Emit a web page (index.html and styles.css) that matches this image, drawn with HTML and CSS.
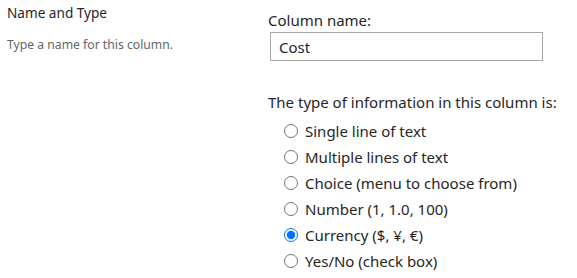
FILE: index.html
```html
<!DOCTYPE html>
<html>
<head>
<meta charset="utf-8">
<link rel="stylesheet" href="styles.css">
</head>
<body>
<div class="section">
  <div class="desc">
    <div class="title">Name and Type</div>
    <div class="hint">Type a name for this column.</div>
  </div>
  <div class="fields">
    <label class="label" for="colname">Column name:</label>
    <input class="textbox" id="colname" type="text" value="Cost">
    <div class="label type-label">The type of information in this column is:</div>
    <div class="options">
      <label class="option"><input type="radio" name="t"> Single line of text</label>
      <label class="option"><input type="radio" name="t"> Multiple lines of text</label>
      <label class="option"><input type="radio" name="t"> Choice (menu to choose from)</label>
      <label class="option"><input type="radio" name="t"> Number (1, 1.0, 100)</label>
      <label class="option"><input type="radio" name="t" checked> Currency ($, ¥, €)</label>
      <label class="option"><input type="radio" name="t"> Yes/No (check box)</label>
    </div>
  </div>
</div>
</body>
</html>
```

FILE: styles.css
```css
html, body {
  margin: 0;
  padding: 0;
  background: #fff;
}
body {
  font-family: "Noto Sans", "Open Sans", sans-serif;
  color: #333;
}
.section {
  display: flex;
  padding: 3px 0 0 7px;
}
.desc {
  width: 261px;
  flex: none;
}
.title {
  font-size: 13.6px;
  line-height: 20px;
  color: #262626;
}
.hint {
  font-size: 12.2px;
  line-height: 16px;
  color: #666;
  margin-top: 14px;
}
.fields {
  display: flex;
  flex-direction: column;
  align-items: flex-start;
  padding-top: 7px;
}
.label {
  font-size: 15px;
  line-height: 20px;
  color: #262626;
}
.textbox {
  margin: 2px 0 0 2px;
  width: 273px;
  height: 29px;
  box-sizing: border-box;
  border: 1px solid #a6a6a6;
  padding: 0 8px;
  font-family: inherit;
  font-size: 15px;
  color: #262626;
  outline: none;
}
.type-label {
  margin-top: 31px;
}
.options {
  display: flex;
  flex-direction: column;
  padding-left: 14px;
  margin-top: 6px;
}
.option {
  font-size: 15px;
  line-height: 26px;
  color: #262626;
  display: flex;
  align-items: center;
}
.option input {
  width: 14px;
  height: 14px;
  margin: 0 7px 0 2px;
}
```
